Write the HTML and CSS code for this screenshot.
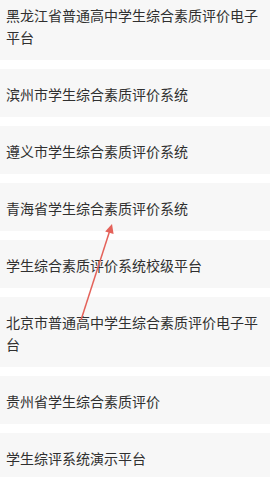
FILE: index.html
```html
<!DOCTYPE html>
<html lang="zh">
<head>
<meta charset="utf-8">
<link rel="stylesheet" href="styles.css">
</head>
<body>
<div class="page">
  <ul class="list">
    <li class="item">黑龙江省普通高中学生综合素质评价电子平台</li>
    <li class="item">滨州市学生综合素质评价系统</li>
    <li class="item">遵义市学生综合素质评价系统</li>
    <li class="item">青海省学生综合素质评价系统</li>
    <li class="item">学生综合素质评价系统校级平台</li>
    <li class="item">北京市普通高中学生综合素质评价电子平台</li>
    <li class="item">贵州省学生综合素质评价</li>
    <li class="item">学生综评系统演示平台</li>
  </ul>
  <svg class="arrow" width="270" height="477" viewBox="0 0 270 477">
    <line x1="81" y1="320" x2="110" y2="230" stroke="#e4625a" stroke-width="1.5"/>
    <polygon points="112,224 113.6,234 105.2,231.4" fill="#e4625a"/>
  </svg>
</div>
</body>
</html>
```

FILE: styles.css
```css
html, body {
  margin: 0;
  padding: 0;
  background: #ffffff;
}
.page {
  position: relative;
  width: 270px;
  height: 477px;
  overflow: hidden;
}
.list {
  list-style: none;
  margin: -10px 0 0 0;
  padding: 0;
  display: flex;
  flex-direction: column;
  gap: 9px;
}
.item {
  background: #f7f7f7;
  padding: 14px 6px 12px 6px;
  font-family: "Noto Sans CJK SC", "Noto Sans", sans-serif;
  font-size: 14px;
  line-height: 22px;
  color: #303030;
}
.arrow {
  position: absolute;
  left: 0;
  top: 0;
}
```
